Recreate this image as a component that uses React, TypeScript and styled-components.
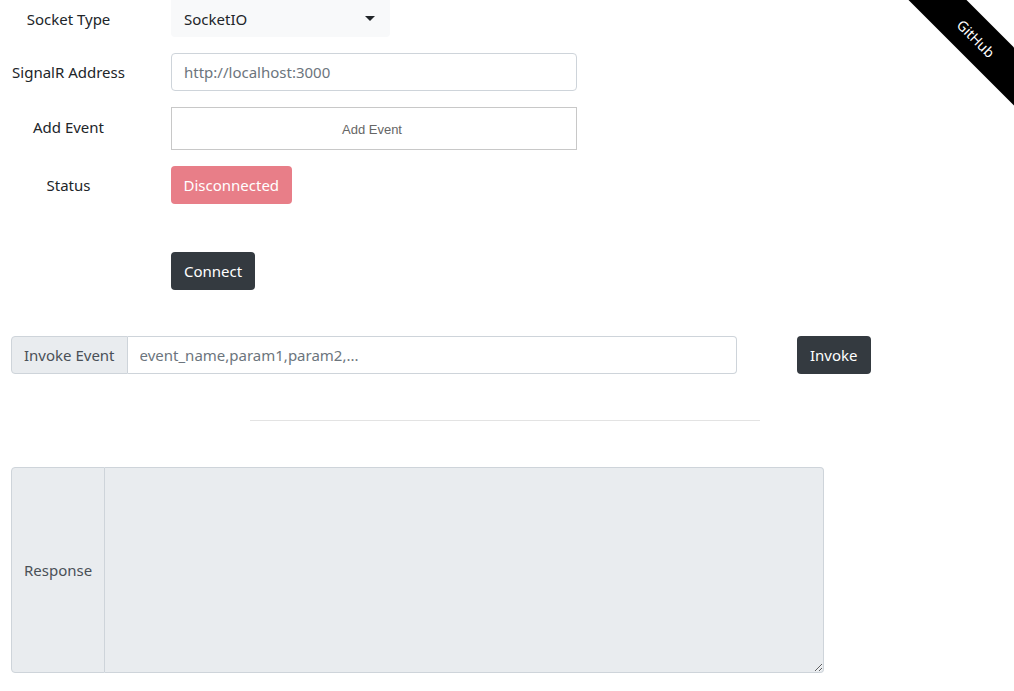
import React from 'react';
import styled, { createGlobalStyle } from 'styled-components';

const GlobalStyle = createGlobalStyle`
  html, body {
    margin: 0;
    padding: 0;
    background: #fff;
  }
  body {
    font-family: "Noto Sans", "Open Sans", sans-serif;
    font-size: 16px;
    color: #212529;
    overflow: hidden;
  }
`;

const Page = styled.div`
  position: relative;
  width: 1014px;
  height: 691px;
  overflow: hidden;
`;

const Form = styled.div`
  display: grid;
  grid-template-columns: 137px 406px;
  column-gap: 34px;
  row-gap: 16px;
  align-items: center;
`;

const Label = styled.div<{ lift?: number }>`
  text-align: center;
  font-size: 15px;
  line-height: 24px;
  margin-top: ${p => (p.lift ? -p.lift : 0)}px;
`;

const Select = styled.div`
  justify-self: start;
  width: 219px;
  height: 37px;
  box-sizing: border-box;
  background: #f8f9fa;
  border-radius: 0 0 4px 4px;
  display: flex;
  align-items: center;
  justify-content: space-between;
  padding: 0 13px;
  font-size: 15px;
`;

const Caret = styled.span`
  width: 0;
  height: 0;
  border-left: 5px solid transparent;
  border-right: 5px solid transparent;
  border-top: 5px solid #212529;
  margin-right: 2px;
`;

const TextInput = styled.input`
  height: 38px;
  box-sizing: border-box;
  border: 1px solid #ced4da;
  border-radius: 4px;
  padding: 0 12px;
  font: inherit;
  font-size: 15px;
  color: #495057;
  outline: none;
  &::placeholder {
    color: #6c757d;
  }
`;

const AddBox = styled.div`
  height: 43px;
  box-sizing: border-box;
  border: 1px solid #c8c8c8;
  display: flex;
  align-items: center;
  justify-content: center;
  font-family: "Liberation Sans", Arial, sans-serif;
  font-size: 13px;
  color: #666;
  padding: 2px 4px 0 0;
`;

const Badge = styled.div`
  justify-self: start;
  height: 38px;
  box-sizing: border-box;
  padding: 0 12.5px;
  display: flex;
  align-items: center;
  background: #e87e88;
  color: #fff;
  border-radius: 4px;
  font-size: 15px;
`;

const Spacer = styled.div`
  grid-column: 1 / -1;
  height: 16px;
`;

const DarkButton = styled.button`
  justify-self: start;
  height: 38px;
  box-sizing: border-box;
  padding: 0 13px;
  background: #343a40;
  color: #fff;
  border: none;
  border-radius: 4px;
  font: inherit;
  font-size: 15px;
`;

const InvokeRow = styled.div`
  display: flex;
  align-items: center;
  gap: 60px;
  margin: 46px 0 0 11px;
`;

const Group = styled.div<{ w: number; h: number }>`
  display: flex;
  width: ${p => p.w}px;
  height: ${p => p.h}px;
`;

const Prepend = styled.div<{ px: number }>`
  display: flex;
  align-items: center;
  padding: 0 ${p => p.px}px;
  background: #e9ecef;
  border: 1px solid #ced4da;
  border-radius: 4px 0 0 4px;
  color: #495057;
  font-size: 15px;
  box-sizing: border-box;
  white-space: nowrap;
`;

const GroupInput = styled(TextInput)`
  flex: 1;
  height: 100%;
  border-left: none;
  border-radius: 0 4px 4px 0;
`;

const Divider = styled.hr`
  width: 510px;
  margin: 46px 0 0 250px;
  border: 0;
  border-top: 1px solid #e3e3e3;
`;

const ResponseWrap = styled.div`
  margin: 46px 0 0 11px;
`;

const ResponseArea = styled.textarea`
  flex: 1;
  height: 100%;
  box-sizing: border-box;
  background: #e9ecef;
  border: 1px solid #ced4da;
  border-left: none;
  border-radius: 0 4px 4px 0;
  outline: none;
  resize: both;
  font: inherit;
`;

const Ribbon = styled.a`
  position: absolute;
  top: 18px;
  right: -57px;
  width: 190px;
  height: 41px;
  background: #000;
  color: #fff;
  transform: rotate(45deg);
  display: flex;
  align-items: center;
  justify-content: center;
  font-size: 14px;
  text-decoration: none;
`;

export default function App() {
  return (
    <Page>
      <GlobalStyle />
      <Form>
        <Label>Socket Type</Label>
        <Select>
          <span>SocketIO</span>
          <Caret />
        </Select>
        <Label>SignalR Address</Label>
        <TextInput placeholder="http://localhost:3000" />
        <Label lift={4}>Add Event</Label>
        <AddBox>Add Event</AddBox>
        <Label>Status</Label>
        <Badge>Disconnected</Badge>
        <Spacer />
        <div />
        <DarkButton>Connect</DarkButton>
      </Form>

      <InvokeRow>
        <Group w={726} h={38}>
          <Prepend px={12}>Invoke Event</Prepend>
          <GroupInput placeholder="event_name,param1,param2,..." />
        </Group>
        <DarkButton>Invoke</DarkButton>
      </InvokeRow>

      <Divider />

      <ResponseWrap>
        <Group w={813} h={206}>
          <Prepend px={12}>Response</Prepend>
          <ResponseArea disabled />
        </Group>
      </ResponseWrap>

      <Ribbon href="#">GitHub</Ribbon>
    </Page>
  );
}
